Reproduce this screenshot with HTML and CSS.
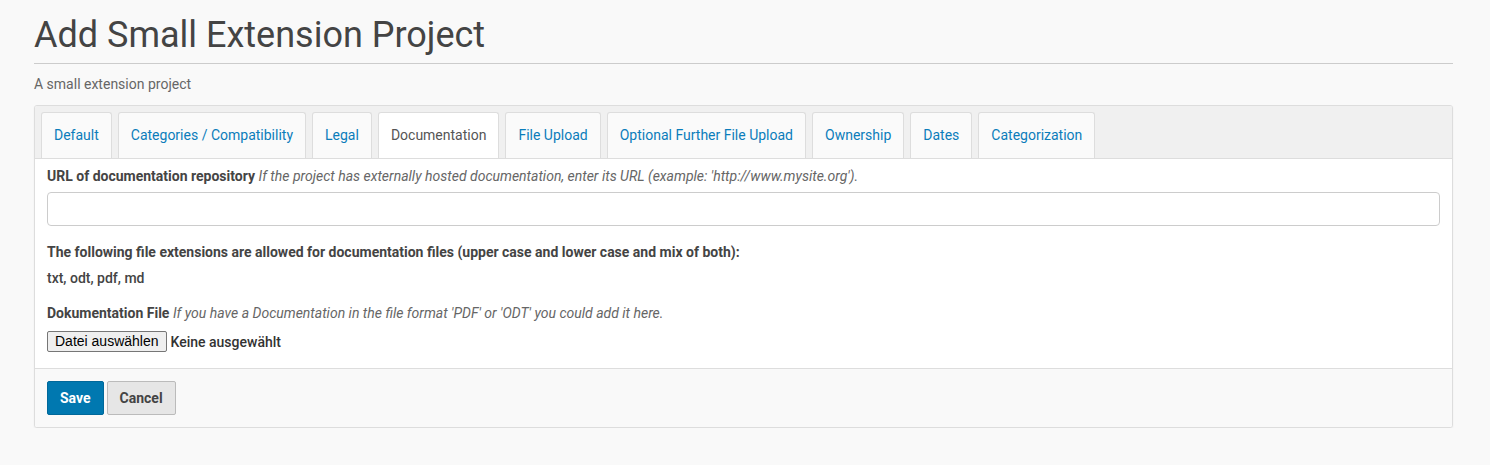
FILE: index.html
```html
<!DOCTYPE html>
<html>
<head>
<meta charset="utf-8">
<link rel="stylesheet" href="styles.css">
</head>
<body>
<div class="page">
  <h1 class="title">Add Small Extension Project</h1>
  <p class="subtitle">A small extension project</p>
  <div class="panel">
    <div class="tabs">
      <a class="tab">Default</a>
      <a class="tab">Categories / Compatibility</a>
      <a class="tab">Legal</a>
      <a class="tab active">Documentation</a>
      <a class="tab">File Upload</a>
      <a class="tab">Optional Further File Upload</a>
      <a class="tab">Ownership</a>
      <a class="tab">Dates</a>
      <a class="tab">Categorization</a>
    </div>
    <div class="content">
      <div class="label"><b>URL of documentation repository</b> <i>If the project has externally hosted documentation, enter its URL (example: 'http://www.mysite.org').</i></div>
      <input class="text-input" type="text">
      <div class="label ext-title"><b>The following file extensions are allowed for documentation files (upper case and lower case and mix of both):</b></div>
      <div class="ext-list">txt, odt, pdf, md</div>
      <div class="label file-label"><b>Dokumentation File</b> <i>If you have a Documentation in the file format 'PDF' or 'ODT' you could add it here.</i></div>
      <div class="file-row">
        <button class="file-btn" type="button">Datei auswählen</button>
        <span class="file-name">Keine ausgewählt</span>
      </div>
    </div>
    <div class="footer">
      <button class="btn btn-save" type="button">Save</button>
      <button class="btn btn-cancel" type="button">Cancel</button>
    </div>
  </div>
</div>
</body>
</html>
```
FILE: styles.css
```css
html, body {
  margin: 0;
  padding: 0;
  background: #f9f9f9;
  font-family: Roboto, "Liberation Sans", Arial, sans-serif;
  color: #444;
}
.page {
  padding: 0 37px 0 34px;
}
.title {
  margin: 15px 0 0;
  padding-bottom: 8px;
  border-bottom: 1px solid #ccc;
  font-size: 36px;
  line-height: 40px;
  font-weight: 400;
  color: #444;
}
.subtitle {
  margin: 10px 0 11px;
  font-size: 14px;
  line-height: 20px;
  color: #666;
}
.panel {
  border: 1px solid #ddd;
  border-radius: 3px;
  background: #fff;
  box-shadow: 0 1px 2px rgba(0,0,0,0.06);
  overflow: hidden;
}
.tabs {
  display: flex;
  gap: 6px;
  padding: 6px 6px 0;
  background: #f0f0f0;
  border-bottom: 1px solid #ddd;
}
.tab {
  display: block;
  padding: 0 12px;
  height: 45px;
  line-height: 44px;
  font-size: 14px;
  color: #0b7dbb;
  background: #fafafa;
  border: 1px solid #ddd;
  border-bottom: none;
  border-radius: 3px 3px 0 0;
}
.tab.active {
  background: #fff;
  color: #555;
}
.content {
  padding: 7px 12px 16px;
  background: #fff;
}
.label {
  font-size: 14px;
  line-height: 20px;
  color: #444;
}
.label b {
  font-weight: 700;
}
.label i {
  color: #666;
}
.text-input {
  display: block;
  box-sizing: border-box;
  width: 100%;
  height: 34px;
  margin: 6px 0 0;
  border: 1px solid #ccc;
  border-radius: 4px;
  background: #fff;
  font-size: 14px;
  padding: 6px 12px;
}
.ext-title {
  margin-top: 16px;
}
.ext-list {
  margin-top: 6px;
  font-size: 14px;
  line-height: 20px;
  font-weight: 500;
  color: #444;
}
.file-label {
  margin-top: 15px;
}
.file-row {
  display: flex;
  align-items: center;
  gap: 4px;
  margin-top: 8px;
}
.file-btn {
  height: 21px;
  padding: 0 7px;
  border: 1px solid #767676;
  border-radius: 2px;
  background: #efefef;
  font-family: "Liberation Sans", Arial, sans-serif;
  font-size: 14px;
  line-height: 19px;
  color: #000;
}
.file-name {
  font-size: 14px;
  font-weight: 500;
  color: #333;
}
.footer {
  display: flex;
  gap: 3px;
  padding: 12px 12px 12px;
  background: #f9f9f9;
  border-top: 1px solid #ddd;
}
.btn {
  height: 34px;
  padding: 0 12px;
  border-radius: 2px;
  font-family: Roboto, "Liberation Sans", Arial, sans-serif;
  font-size: 14px;
  font-weight: 700;
}
.btn-save {
  background: #0078b0;
  border: 1px solid #00689a;
  color: #fff;
}
.btn-cancel {
  background: #e6e6e6;
  border: 1px solid #bbb;
  color: #444;
}
```
